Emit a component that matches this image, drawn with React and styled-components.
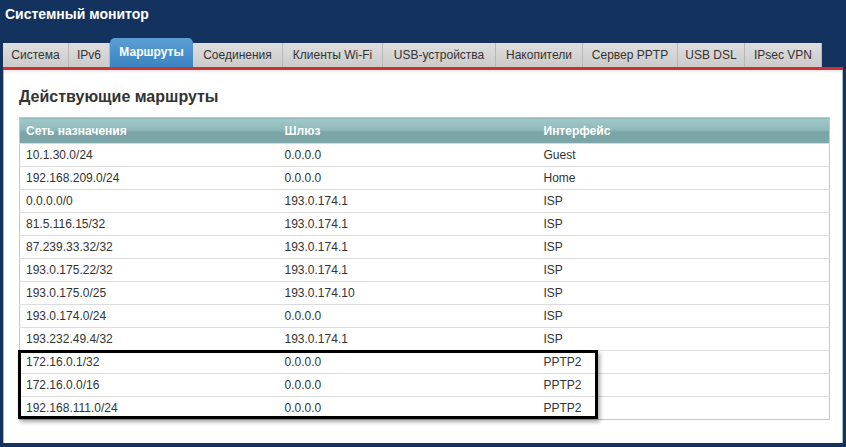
import React from "react";
import styled, { createGlobalStyle } from "styled-components";

const GlobalStyle = createGlobalStyle`
  html, body {
    margin: 0;
    padding: 0;
    background: #13335e;
    font-family: "Liberation Sans", Arial, sans-serif;
  }
`;

// label + width taken from the router's own tab strip
const tabs = [
  ["Система", 66],
  ["IPv6", 41],
  ["Маршруты", 83],
  ["Соединения", 90],
  ["Клиенты Wi-Fi", 100],
  ["USB-устройства", 113],
  ["Накопители", 87],
  ["Сервер PPTP", 95],
  ["USB DSL", 67],
  ["IPsec VPN", 77],
];

const routes = [
  ["10.1.30.0/24", "0.0.0.0", "Guest"],
  ["192.168.209.0/24", "0.0.0.0", "Home"],
  ["0.0.0.0/0", "193.0.174.1", "ISP"],
  ["81.5.116.15/32", "193.0.174.1", "ISP"],
  ["87.239.33.32/32", "193.0.174.1", "ISP"],
  ["193.0.175.22/32", "193.0.174.1", "ISP"],
  ["193.0.175.0/25", "193.0.174.10", "ISP"],
  ["193.0.174.0/24", "0.0.0.0", "ISP"],
  ["193.232.49.4/32", "193.0.174.1", "ISP"],
  ["172.16.0.1/32", "0.0.0.0", "PPTP2"],
  ["172.16.0.0/16", "0.0.0.0", "PPTP2"],
  ["192.168.111.0/24", "0.0.0.0", "PPTP2"],
];

const HEAD_H = 26;
const ROW_H = 23;

const Page = styled.div`
  width: 846px;
  height: 447px;
  overflow: hidden;
`;

const Title = styled.div`
  height: 38px;
  box-sizing: border-box;
  padding: 5px 0 0 5px;
  color: #fff;
  font-weight: bold;
  font-size: 14px;
  line-height: 18px;
`;

const TabBar = styled.div`
  display: flex;
  align-items: flex-end;
  height: 29px;
  margin-left: 3px;
`;

const Tab = styled.div`
  box-sizing: border-box;
  width: ${(p) => p.$w}px;
  text-align: center;
  padding-top: ${(p) => (p.$active ? "7px" : "0")};
  height: ${(p) => (p.$active ? "29px" : "24px")};
  line-height: ${(p) => (p.$active ? "14px" : "24px")};
  font-size: 12px;
  white-space: nowrap;
  font-weight: ${(p) => (p.$active ? "bold" : "normal")};
  color: ${(p) => (p.$active ? "#fff" : "#333")};
  background: ${(p) =>
    p.$active
      ? "linear-gradient(#5b9fd5, #3a84c1)"
      : "linear-gradient(#dedede, #cbcbcb)"};
  border-radius: ${(p) => (p.$active ? "5px 5px 0 0" : "0")};
  border-right: ${(p) => (p.$active ? "none" : "1px solid #b8b8b8")};
`;

const RedLine = styled.div`
  height: 3px;
  margin: 0 3px;
  background: #d22f2f;
`;

const Panel = styled.div`
  height: 373px;
  margin: 0 3px;
  box-sizing: border-box;
  background: #fff;
  border-left: 1px solid #aeb9c8;
  border-right: 1px solid #aeb9c8;
  box-shadow: inset 0 2px 2px rgba(0, 0, 0, 0.08);
  padding: 17px 13px 0 15px;
`;

const Heading = styled.h2`
  margin: 0 0 10px;
  font-size: 16px;
  line-height: 20px;
  font-weight: bold;
  color: #333;
`;

const TableWrap = styled.div`
  position: relative;
  width: 810px;
`;

const Table = styled.table`
  width: 810px;
  border-collapse: collapse;
  table-layout: fixed;
  border: 1px solid #c6c6c6;
  font-size: 12px;
`;

const Th = styled.th`
  height: ${HEAD_H}px;
  padding: 0 6px;
  text-align: left;
  color: #fff;
  font-weight: bold;
  background: linear-gradient(#a1c8ca, #8fb9bb 45%, #7ba4a6 55%, #7ca6a8);
  width: ${(p) => p.$w}px;
  box-sizing: border-box;
`;

const Td = styled.td`
  height: ${ROW_H - 1}px;
  padding: 0 6px;
  color: #333;
  border-top: 1px solid #dcdcdc;
  white-space: nowrap;
`;

const Highlight = styled.div`
  position: absolute;
  left: -1px;
  width: 580px;
  height: ${ROW_H * 3}px;
  box-sizing: border-box;
  border: 3px solid #000;
  box-shadow: 2px 3px 4px rgba(0, 0, 0, 0.35);
  pointer-events: none;
`;

export default function App() {
  return (
    <Page>
      <GlobalStyle />
      <Title>Системный монитор</Title>
      <TabBar>
        {tabs.map(([t, w]) => (
          <Tab key={t} $w={w} $active={t === "Маршруты"}>
            {t}
          </Tab>
        ))}
      </TabBar>
      <RedLine />
      <Panel>
        <Heading>Действующие маршруты</Heading>
        <TableWrap>
          <Table>
            <thead>
              <tr>
                <Th $w={259}>Сеть назначения</Th>
                <Th $w={259}>Шлюз</Th>
                <Th $w={292}>Интерфейс</Th>
              </tr>
            </thead>
            <tbody>
              {routes.map((r) => (
                <tr key={r[0]}>
                  <Td>{r[0]}</Td>
                  <Td>{r[1]}</Td>
                  <Td>{r[2]}</Td>
                </tr>
              ))}
            </tbody>
          </Table>
          <Highlight style={{ top: HEAD_H + ROW_H * 9 }} />
        </TableWrap>
      </Panel>
    </Page>
  );
}
